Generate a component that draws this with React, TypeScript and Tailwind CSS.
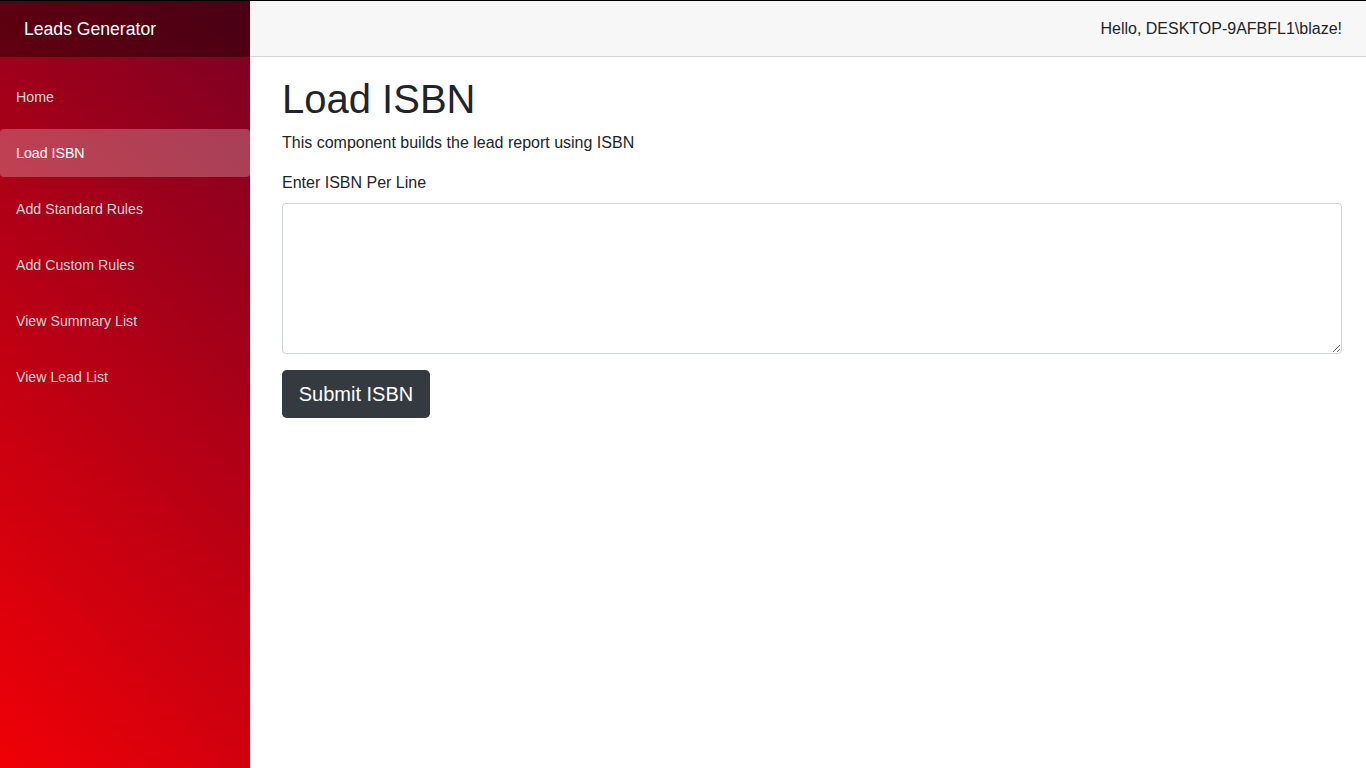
const navItems = [
  'Home',
  'Load ISBN',
  'Add Standard Rules',
  'Add Custom Rules',
  'View Summary List',
  'View Lead List',
];

function Sidebar() {
  return (
    <aside className="flex w-[250px] shrink-0 flex-col bg-[linear-gradient(47deg,#f00006_0%,#7a0024_100%)]">
      <div className="flex h-14 items-center bg-black/40 pl-6 text-[17.6px] text-white">
        Leads Generator
      </div>
      <nav className="flex flex-col pt-4">
        {navItems.map((item) => {
          const active = item === 'Load ISBN';
          return (
            <div key={item} className="pb-2">
              <a
                href="#"
                className={
                  active
                    ? 'flex h-12 items-center rounded bg-white/25 pl-4 pt-[2px] text-[14.2px] text-white'
                    : 'flex h-12 items-center rounded pl-4 pt-[2px] text-[14.2px] text-[#d7d7d7]'
                }
              >
                {item}
              </a>
            </div>
          );
        })}
      </nav>
    </aside>
  );
}

export default function App() {
  return (
    <div className="flex min-h-[768px] border-t border-black font-['Liberation_Sans',Arial,sans-serif] text-[#212529]">
      <Sidebar />
      <main className="flex min-w-0 flex-1 flex-col">
        <div className="flex h-14 items-center justify-end border-b border-[#d6d5d5] bg-[#f7f7f7] pr-6 text-base">
          Hello, DESKTOP-9AFBFL1\blaze!
        </div>
        <div className="pl-8 pr-6 pt-[17.6px]">
          <h1 className="mb-2 text-[40px] leading-[1.2] font-normal">Load ISBN</h1>
          <p className="mb-4 text-base leading-6">This component builds the lead report using ISBN</p>
          <div className="mb-4">
            <label className="mb-2 block text-base leading-6">Enter ISBN Per Line</label>
            <textarea
              rows={6}
              className="block h-[151px] w-full rounded border border-[#ced4da] px-3 py-1.5 text-base outline-none"
            />
          </div>
          <button className="h-12 w-[148px] rounded-[4.8px] bg-[#343a40] text-[20px] leading-[30px] text-white">
            Submit ISBN
          </button>
        </div>
      </main>
    </div>
  );
}
